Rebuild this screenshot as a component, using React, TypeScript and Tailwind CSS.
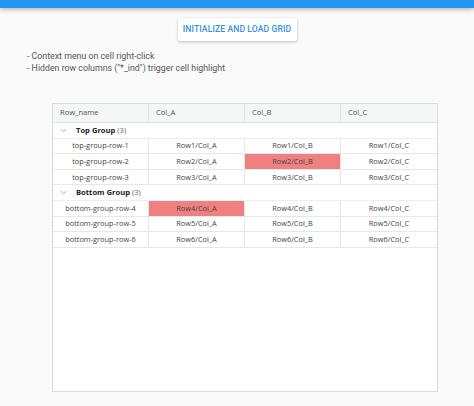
import React from 'react'

type Row = { name: string; n: number; hl?: 'A' | 'B' }

const groups: { label: string; rows: Row[] }[] = [
  {
    label: 'Top Group',
    rows: [
      { name: 'top-group-row-1', n: 1 },
      { name: 'top-group-row-2', n: 2, hl: 'B' },
      { name: 'top-group-row-3', n: 3 },
    ],
  },
  {
    label: 'Bottom Group',
    rows: [
      { name: 'bottom-group-row-4', n: 4, hl: 'A' },
      { name: 'bottom-group-row-5', n: 5 },
      { name: 'bottom-group-row-6', n: 6 },
    ],
  },
]

const cols = ['A', 'B', 'C'] as const

function Chevron() {
  return (
    <svg width="7" height="5" viewBox="0 0 7 5" className="text-[#9aa]">
      <path d="M0.8 1 L3.5 3.8 L6.2 1" fill="none" stroke="currentColor" strokeWidth="0.9" />
    </svg>
  )
}

export default function App() {
  return (
    <div className="w-[474px] h-[406px] bg-[#fafafa] overflow-hidden" style={{ fontFamily: 'Roboto, "Noto Sans", sans-serif' }}>
      <div className="h-[8px] bg-[#2196f3] shadow-[0_2px_4px_rgba(0,0,0,0.25)]" />

      <div className="flex justify-center pt-[10px]">
        <button className="w-[119px] h-[23px] bg-white rounded-[2px] shadow-[0_1px_3px_rgba(0,0,0,0.25)] text-[8.6px] font-medium tracking-[0.1px] text-[#3b8fe3]">
          INITIALIZE AND LOAD GRID
        </button>
      </div>

      <div className="pl-[27px] pt-[9px] text-[8.8px] leading-[12px] text-[#555]">
        <div>- Context menu on cell right-click</div>
        <div>- Hidden row columns ("*_ind") trigger cell highlight</div>
      </div>

      <div className="ml-[52px] mt-[29px] w-[386px] h-[289px] bg-white border border-[#d9dcdc]" style={{ fontFamily: '"Open Sans", "Noto Sans", sans-serif' }}>
        <div className="flex h-[19px] w-[384px] bg-[#f5f7f7] border-b border-[#dde0e0] text-[7.6px] text-[#555]">
          {['Row_name', 'Col_A', 'Col_B', 'Col_C'].map((h, i) => (
            <div key={h} className={`w-[96px] flex items-center pl-[7px] ${i < 3 ? 'border-r border-[#dde0e0]' : ''}`}>
              {h}
            </div>
          ))}
        </div>

        {groups.map((g) => (
          <div key={g.label}>
            <div className="flex items-center h-[15.6px] w-[384px] border-b border-[#eceeee] text-[7.6px]">
              <div className="w-[23px] flex justify-end pr-[9px]">
                <Chevron />
              </div>
              <span className="font-bold text-[#222]">{g.label}</span>
              <span className="ml-[2px] text-[#666]">(3)</span>
            </div>
            {g.rows.map((r) => (
              <div key={r.name} className="flex h-[15.6px] w-[384px] border-b border-[#e6e8e8] text-[7.4px] text-[#444]">
                <div className="w-[96px] flex items-center justify-center border-r border-[#e6e8e8]">{r.name}</div>
                {cols.map((c, i) => (
                  <div
                    key={c}
                    className={`w-[96px] flex items-center justify-center ${i < 2 ? 'border-r border-[#e6e8e8]' : ''} ${r.hl === c ? 'bg-[#f08080]' : ''}`}
                  >
                    Row{r.n}/Col_{c}
                  </div>
                ))}
              </div>
            ))}
          </div>
        ))}
      </div>
    </div>
  )
}
